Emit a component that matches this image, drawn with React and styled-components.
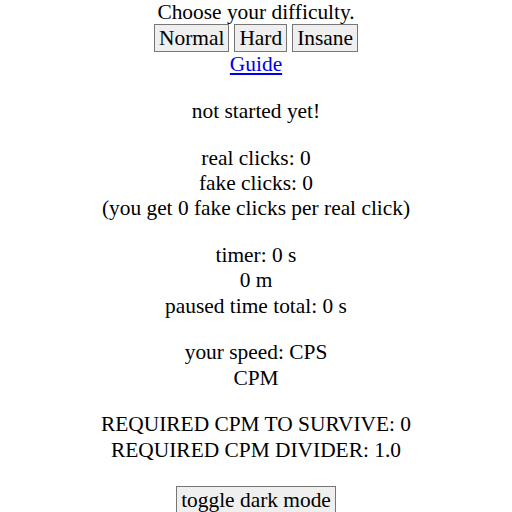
import React from "react";
import styled, { createGlobalStyle } from "styled-components";

const Global = createGlobalStyle`
  html, body { margin: 0; padding: 0; background: #ffffff; }
  body {
    font-family: "Liberation Serif", "Times New Roman", serif;
    font-size: 21.4px;
    line-height: 25.3px;
    color: #000000;
  }
`;

const Page = styled.div`
  text-align: center;
`;

const Line = styled.div``;

const ButtonRow = styled.div`
  display: flex;
  justify-content: center;
  gap: ${(p) => p.$gap || 5}px;
  margin-top: ${(p) => p.$top || -1}px;
`;

const Para = styled.p`
  margin: 21.4px 0;
`;

const Button = styled.button`
  font-family: "Liberation Serif", "Times New Roman", serif;
  font-size: 21.4px;
  line-height: 24px;
  color: #000000;
  background: #efefef;
  border: 1px solid #767676;
  border-radius: 0;
  padding: 1px 4px;
  margin: 0;
`;

const Link = styled.a`
  color: #0000ee;
  text-decoration: underline;
`;

export default function App() {
  return (
    <Page>
      <Global />
      <Line>Choose your difficulty.</Line>
      <ButtonRow>
        <Button>Normal</Button>
        <Button>Hard</Button>
        <Button>Insane</Button>
      </ButtonRow>
      <Line>
        <Link href="#">Guide</Link>
      </Line>
      <Para>not started yet!</Para>
      <Para>
        real clicks: 0
        <br />
        fake clicks: 0
        <br />
        (you get 0 fake clicks per real click)
      </Para>
      <Para>
        timer: 0 s
        <br />
        0 m
        <br />
        paused time total: 0 s
      </Para>
      <Para>
        your speed: CPS
        <br />
        CPM
      </Para>
      <Para>
        REQUIRED CPM TO SURVIVE: 0
        <br />
        REQUIRED CPM DIVIDER: 1.0
      </Para>
      <ButtonRow $top={23}>
        <Button>toggle dark mode</Button>
      </ButtonRow>
    </Page>
  );
}
